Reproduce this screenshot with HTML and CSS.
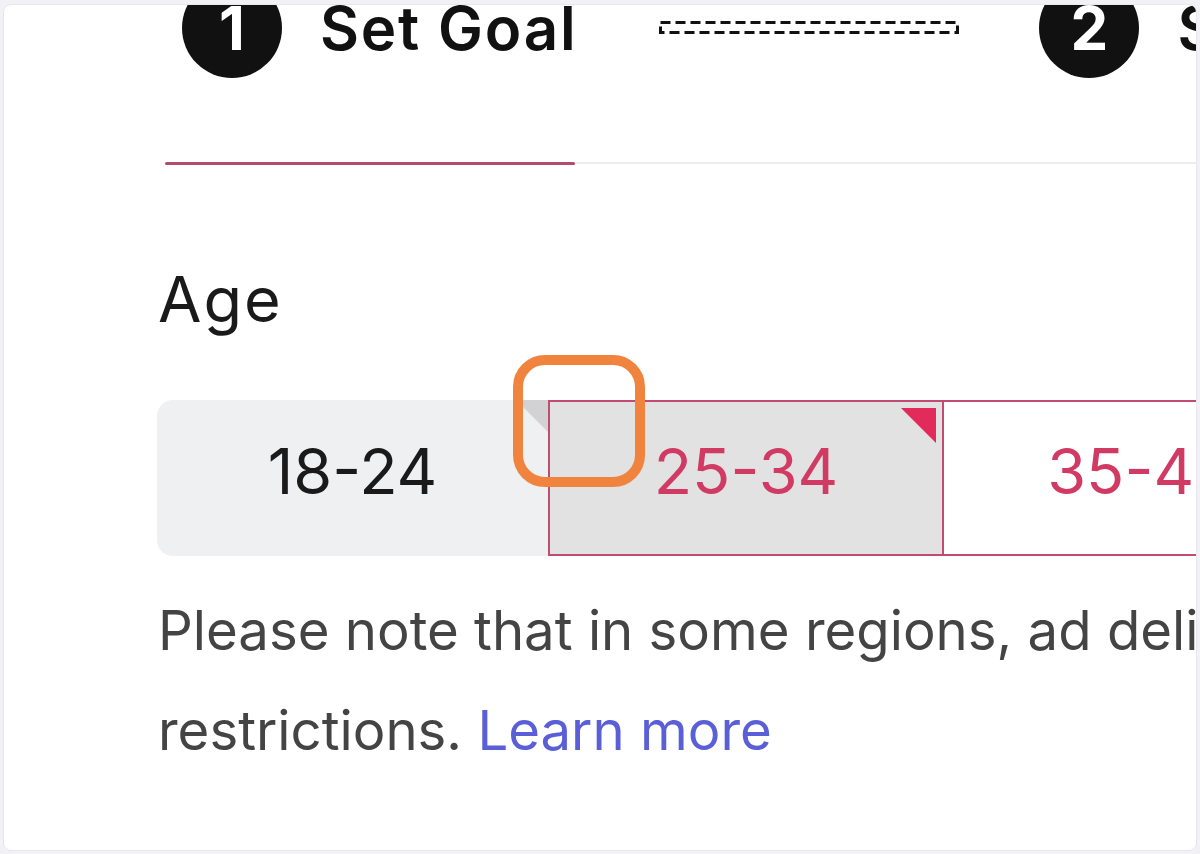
FILE: index.html
```html
<!DOCTYPE html>
<html lang="en">
<head>
<meta charset="utf-8">
<title>Set Goal - Age</title>
<link rel="stylesheet" href="styles.css">
</head>
<body>
<main class="card">
  <div class="stepper">
    <div class="step">
      <span class="step-num">1</span>
      <span class="step-label">Set Goal</span>
    </div>
    <svg class="connector" width="300" height="14" viewBox="0 0 300 14" aria-hidden="true">
      <rect x="1.5" y="1.5" width="297" height="10" fill="none" stroke="#111" stroke-width="3" stroke-dasharray="10 5"/>
    </svg>
    <div class="step">
      <span class="step-num">2</span>
      <span class="step-label">Set Audience</span>
    </div>
  </div>

  <div class="track">
    <div class="track-active"></div>
    <div class="track-rest"></div>
  </div>

  <section class="field">
    <h2 class="field-label">Age</h2>
    <div class="segmented">
      <button class="seg seg-first" type="button">18-24<span class="corner corner-grey"></span></button>
      <button class="seg seg-selected" type="button">25-34<span class="corner corner-pink"></span></button>
      <button class="seg seg-outline" type="button">35-44</button>
      <span class="highlight" aria-hidden="true"></span>
    </div>
    <p class="note">Please note that in some regions, ad delivery may be subject to age restrictions. <a href="#" class="link">Learn more</a></p>
  </section>
</main>
</body>
</html>
```

FILE: styles.css
```css
* { box-sizing: border-box; }

html, body {
  margin: 0;
  padding: 0;
}

body {
  background: #f2f1f6;
  font-family: "Inter", "Liberation Sans", sans-serif;
  color: #1a1a1a;
  padding: 4px 3px 3px 3px;
}

.card {
  height: 847px;
  background: #ffffff;
  border: 1px solid #e8e7ee;
  border-radius: 8px;
  overflow: hidden;
}

.stepper {
  display: flex;
  align-items: center;
  margin-top: -27px;
  padding-left: 178px;
  white-space: nowrap;
}

.step {
  display: flex;
  align-items: center;
  gap: 38px;
  flex: none;
}

.step-num {
  width: 100px;
  height: 100px;
  border-radius: 50%;
  background: #111111;
  color: #ffffff;
  font-size: 60px;
  font-weight: 700;
  display: flex;
  align-items: center;
  justify-content: center;
  line-height: 1;
  flex: none;
}

.step-label {
  font-size: 60px;
  font-weight: 600;
  color: #111111;
  letter-spacing: 1.8px;
}

.connector {
  flex: none;
  margin: 0 80px 0 82px;
  display: block;
}

.track {
  display: flex;
  align-items: center;
  margin-top: 83px;
  margin-left: 161px;
  height: 4px;
}

.track-active {
  width: 410px;
  height: 3px;
  background: #b44a6e;
  border-radius: 2px;
}

.track-rest {
  flex: 1;
  height: 2px;
  background: #ededef;
}

.field {
  padding-left: 153px;
}

.field-label {
  margin: 94px 0 0 1px;
  font-size: 63px;
  font-weight: 400;
  line-height: 80px;
  letter-spacing: 2px;
  color: #1a1a1a;
}

.segmented {
  position: relative;
  display: flex;
  margin-top: 61px;
  height: 156px;
  white-space: nowrap;
}

.seg {
  position: relative;
  flex: none;
  height: 156px;
  font-family: inherit;
  font-size: 63px;
  font-weight: 400;
  padding: 0 0 14px 0;
  margin: 0;
  display: flex;
  align-items: center;
  justify-content: center;
  cursor: pointer;
}

.seg-first {
  width: 391px;
  background: #eff0f2;
  border: none;
  border-radius: 16px 0 0 16px;
  color: #1a1a1a;
}

.seg-selected {
  width: 396px;
  background: #e2e2e2;
  border: 2px solid #c34a70;
  color: #d13a63;
}

.seg-outline {
  width: 396px;
  background: #ffffff;
  border: 2px solid #c34a70;
  border-left: none;
  color: #d13a63;
}

.corner {
  position: absolute;
  width: 0;
  height: 0;
  border-left-style: solid;
  border-left-color: transparent;
  border-top-style: solid;
}

.corner-grey {
  top: 0;
  right: 0;
  border-left-width: 32px;
  border-top-width: 32px;
  border-top-color: #d2d2d4;
}

.corner-pink {
  top: 6px;
  right: 6px;
  border-left-width: 35px;
  border-top-width: 35px;
  border-top-color: #e32b5b;
}

.highlight {
  position: absolute;
  left: 356px;
  top: -45px;
  width: 132px;
  height: 132px;
  border: 10px solid #f0843f;
  border-radius: 32px;
  pointer-events: none;
}

.note {
  margin: 24px 0 0 1px;
  width: 1950px;
  font-size: 54.5px;
  line-height: 100px;
  color: #444444;
}

.note .link {
  color: #5a5fd8;
  text-decoration: none;
}
```
